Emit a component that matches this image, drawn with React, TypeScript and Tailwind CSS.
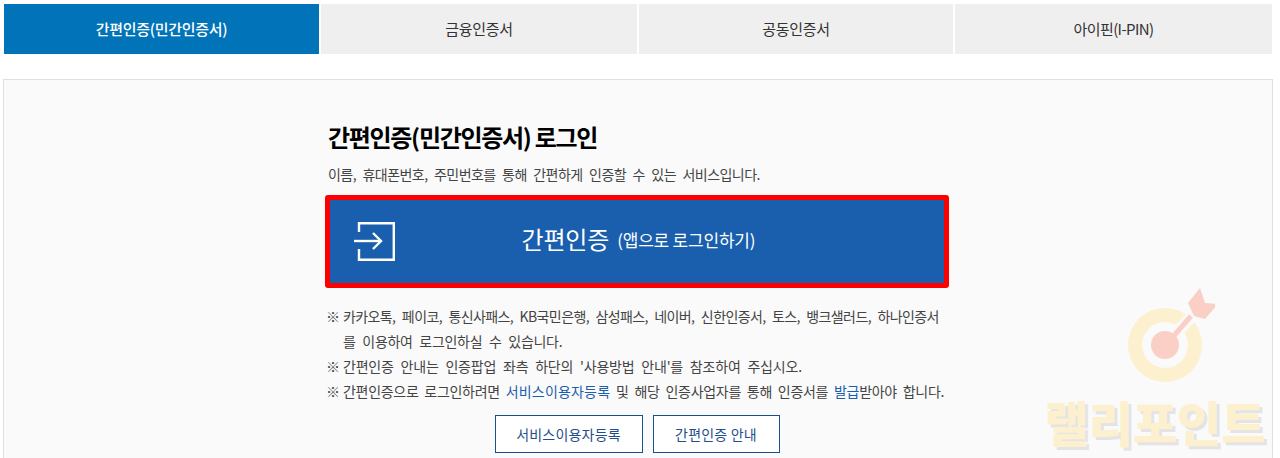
const tabs = [
  { label: "간편인증(민간인증서)", width: "w-[315px]", tracking: "tracking-[-0.3px]" },
  { label: "금융인증서", width: "w-[316px]", tracking: "tracking-[-0.3px]" },
  { label: "공동인증서", width: "w-[314px]", tracking: "tracking-[-0.3px]" },
  { label: "아이핀(I-PIN)", width: "w-[317px]", tracking: "tracking-[-0.6px]" },
];

function Note({ children, className }: { children: React.ReactNode; className?: string }) {
  return (
    <li className={"flex h-[25px] items-center whitespace-nowrap " + (className ?? "")}>
      <span className="-ml-[1px] w-[17px] shrink-0 text-[14px] tracking-normal">※</span>
      <span>{children}</span>
    </li>
  );
}

export default function App() {
  return (
    <div className="relative h-[458px] w-[1280px] overflow-hidden bg-white font-['Noto_Sans_CJK_KR',sans-serif]">
      {/* Tabs */}
      <div className="ml-1 flex gap-0.5 pt-1">
        {tabs.map((tab, i) => (
          <div
            key={tab.label}
            className={
              i === 0
                ? `flex h-[50px] ${tab.width} items-center justify-center bg-[#0073b9] text-[15px] font-medium ${tab.tracking} text-white`
                : `flex h-[50px] ${tab.width} items-center justify-center bg-[#efefef] text-[15px] ${tab.tracking} text-[#333]`
            }
          >
            {tab.label}
          </div>
        ))}
      </div>

      {/* Panel */}
      <div className="ml-[3px] mt-[25px] h-[400px] w-[1270px] border border-[#dfdfdf] bg-[#fafafa] pl-[321px] pt-[39px]">
        <div className="w-[624px]">
          <h2 className="ml-[3px] text-[24px] font-bold leading-[36px] tracking-[-1.3px] text-black">
            간편인증(민간인증서) 로그인
          </h2>
          <p className="ml-[3px] mt-[9px] text-[14px] leading-[20px] tracking-[-0.55px] [word-spacing:3.9px] text-[#444]">
            이름, 휴대폰번호, 주민번호를 통해 간편하게 인증할 수 있는 서비스입니다.
          </p>
          <div className="relative mt-[11px] flex h-[93px] items-center justify-center rounded-[3px] border-[5px] border-[#ff0000] bg-[#1a5fad] pb-[5px] text-white">
            <svg
              className="absolute left-[24px] top-[22px]"
              width="42"
              height="40"
              viewBox="0 0 42 40"
              fill="none"
              stroke="white"
              strokeWidth="2.4"
            >
              <path d="M5 10V1.2h34.8v36.6H5V27" />
              <path d="M0 19h27" />
              <path d="M19 11l8 8-8 8" />
            </svg>
            <span className="ml-[3px] text-[24px] leading-none tracking-[-0.2px]">간편인증</span>
            <span className="ml-[8px] text-[17px] leading-none tracking-[-0.2px]">(앱으로 로그인하기)</span>
          </div>

          <ul className="ml-[2px] mt-[16px] text-[14px] text-[#444]">
            <Note className="tracking-[-0.6px] [word-spacing:3.9px]">
              카카오톡, 페이코, 통신사패스, KB국민은행, 삼성패스, 네이버, 신한인증서, 토스, 뱅크샐러드, 하나인증서
            </Note>
            <li className="flex h-[25px] items-center whitespace-nowrap pl-[16px] tracking-[-0.3px] [word-spacing:3.9px]">
              를 이용하여 로그인하실 수 있습니다.
            </li>
            <Note className="tracking-[-0.2px] [word-spacing:3.9px]">
              간편인증 안내는 인증팝업 좌측 하단의 '사용방법 안내'를 참조하여 주십시오.
            </Note>
            <Note className="tracking-[-0.3px] [word-spacing:3px]">
              간편인증으로 로그인하려면 <span className="tracking-[0.2px] text-[#1a5fad]">서비스이용자등록</span> 및 해당 인증사업자를 통해 인증서를{" "}
              <span className="text-[#1a5fad]">발급</span>받아야 합니다.
            </Note>
          </ul>

          <div className="mt-[11px] flex justify-center gap-[10px] text-[14px] tracking-[0.2px] text-[#1f4e8c]">
            <div className="flex h-[38px] w-[148px] items-center justify-center border border-[#1a4f8f] bg-white">서비스이용자등록</div>
            <div className="flex h-[38px] w-[127px] items-center justify-center border border-[#1a4f8f] bg-white">간편인증 안내</div>
          </div>
        </div>
      </div>

      {/* Watermark */}
      <div className="pointer-events-none absolute left-[1040px] top-[285px] flex w-[230px] flex-col items-center">
        <svg width="120" height="100" viewBox="0 0 120 100">
          <circle cx="70" cy="60" r="37" fill="#fdf0cf" />
          <circle cx="70" cy="60" r="23" fill="#fafafa" />
          <path d="M84 45L100 28" stroke="#fafafa" strokeWidth="12" />
          <circle cx="70" cy="60" r="14" fill="#f9cfc6" />
          <path d="M70 61L96 31" stroke="#f9cfc6" strokeWidth="5" />
          <path d="M105 3l5 15 13 1-13 15-11-3-6-13z" fill="#f9cfc6" />
        </svg>
        <span className="mt-[10px] text-[48px] font-black leading-[52px] text-[#fdf0cf] [text-shadow:3px_3px_0_#e4e4e4]">
          랠리포인트
        </span>
      </div>
    </div>
  );
}
